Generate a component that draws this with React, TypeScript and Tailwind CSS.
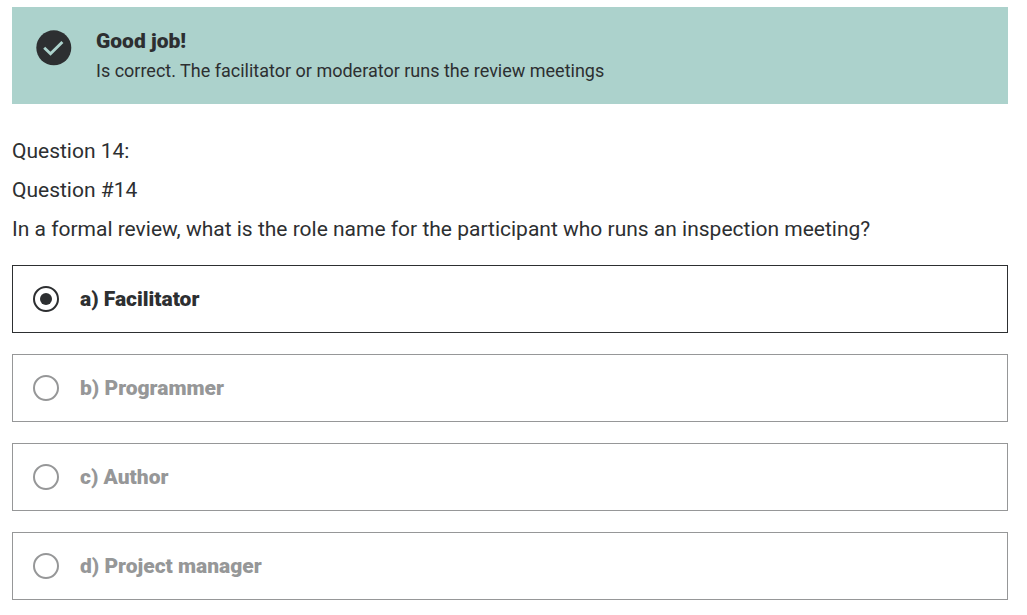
import { useState } from "react";

const answers = ["a) Facilitator", "b) Programmer", "c) Author", "d) Project manager"];

function Feedback() {
  return (
    <section role="status" className="flex items-start gap-6 bg-[#acd2cc] px-6 py-[21px]">
      <svg viewBox="0 0 36 36" className="mt-[2px] size-9 shrink-0" aria-hidden="true">
        <circle cx="17.8" cy="17.8" r="17.5" fill="#2d2f31" />
        <path d="M8.2 17.8 L14.5 23.8 L26.4 12" fill="none" stroke="#acd2cc" strokeWidth="2.9" />
      </svg>
      <div>
        <h2 className="text-[21px] leading-[26px] font-black">Good job!</h2>
        <p className="mt-1 text-[18px] leading-[25px]">Is correct. The facilitator or moderator runs the review meetings</p>
      </div>
    </section>
  );
}

export default function App() {
  const [selected, setSelected] = useState(0);
  return (
    <main className="bg-white pt-[7px] pr-[19px] pb-4 pl-3 font-['Roboto',sans-serif] text-[#2d2f31]">
      <Feedback />
      <div className="mt-8 flex flex-col gap-[9px] text-[21px] leading-[30px]">
        <p>Question 14:</p>
        <p>Question #14</p>
        <p id="prompt">In a formal review, what is the role name for the participant who runs an inspection meeting?</p>
      </div>
      <div role="radiogroup" aria-labelledby="prompt" className="mt-[21px] flex flex-col gap-[21px]">
        {answers.map((a, i) => (
          <label key={a} className={i === selected ? "flex items-center gap-[21px] border border-[#2d2f31] px-5 py-[18px]" : "flex items-center gap-[21px] border border-[#969798] px-5 py-[18px] text-[#969798]"}>
            <input
              type="radio"
              name="answer"
              checked={i === selected}
              onChange={() => setSelected(i)}
              className="grid size-[26px] shrink-0 appearance-none place-items-center rounded-full border-2 border-[#969798] before:size-3 before:rounded-full checked:border-[#2d2f31] checked:before:bg-[#2d2f31]"
            />
            <span className="text-[21px] leading-[30px] font-black">{a}</span>
          </label>
        ))}
      </div>
    </main>
  );
}
